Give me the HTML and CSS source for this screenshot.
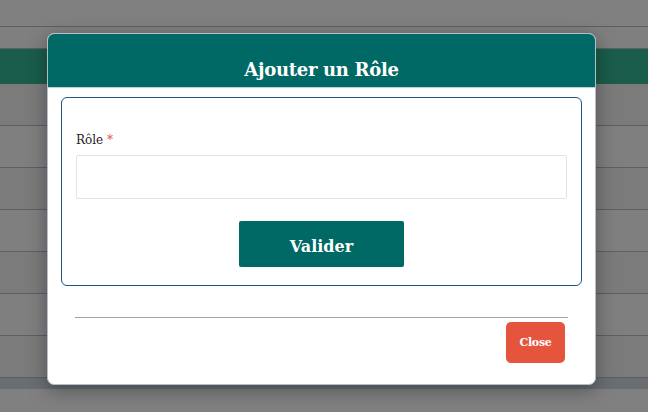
FILE: index.html
```html
<!DOCTYPE html>
<html lang="fr">
<head>
<meta charset="utf-8">
<title>Ajouter un Rôle</title>
<link rel="stylesheet" href="styles.css">
</head>
<body>
<div class="page">
  <div class="row r-top"></div>
  <div class="row r-sub"></div>
  <div class="row r-head"></div>
  <div class="row r-a"></div>
  <div class="row r-b"></div>
  <div class="row r-a"></div>
  <div class="row r-b"></div>
  <div class="row r-a"></div>
  <div class="row r-b"></div>
  <div class="row r-a"></div>
  <div class="row r-foot"></div>
  <div class="row r-end"></div>

  <div class="modal">
    <div class="modal-header">
      <h4 class="modal-title">Ajouter un Rôle</h4>
    </div>
    <div class="modal-body">
      <div class="card">
        <label class="label">Rôle <span class="req">*</span></label>
        <input class="input" type="text">
        <div class="actions">
          <button class="btn-valider">Valider</button>
        </div>
      </div>
    </div>
    <div class="modal-footer">
      <hr class="sep">
      <div class="foot-actions">
        <button class="btn-close">Close</button>
      </div>
    </div>
  </div>
</div>
</body>
</html>
```

FILE: styles.css
```css
* { box-sizing: border-box; }
html, body { margin: 0; padding: 0; }
body {
  width: 648px;
  height: 412px;
  overflow: hidden;
  background: #808080;
  font-family: "DejaVu Serif", "Liberation Serif", serif;
}
.page {
  position: relative;
  width: 648px;
  height: 412px;
}
.row { width: 100%; }
.r-top { height: 27px; background: #808080; border-bottom: 1px solid #5c5f63; }
.r-sub { height: 22px; background: #7f7f7f; border-bottom: 1px solid #5c5f63; }
.r-head { height: 35px; background: #1a5d4b; }
.r-a { height: 42px; background: #7b7b7b; border-bottom: 1px solid #5c5f63; }
.r-b { height: 42px; background: #7f7f7f; border-bottom: 1px solid #5c5f63; }
.r-foot { height: 11px; background: #6a6d71; }
.r-end { height: 22px; background: #808080; }

.modal {
  position: absolute;
  left: 47px;
  top: 33px;
  width: 549px;
  height: 352px;
  background: #fff;
  border: 1px solid #b3bfcb;
  border-radius: 7px;
  box-shadow: 0 5px 20px rgba(0,0,0,0.35);
  display: flex;
  flex-direction: column;
}
.modal-header {
  height: 54px;
  background: #006966;
  border-radius: 6px 6px 0 0;
  border-bottom: 1px solid #c3d0d6;
  display: flex;
  justify-content: center;
  padding-top: 25px;
}
.modal-title {
  margin: 0;
  color: #fff;
  font-size: 18px;
  font-weight: bold;
  line-height: 22px;
  letter-spacing: -0.3px;
}
.modal-body {
  padding: 9px 13px 0 13px;
}
.card {
  height: 189px;
  border: 1px solid #1d5380;
  border-radius: 6px;
  padding: 35px 14px 0 14px;
  display: flex;
  flex-direction: column;
}
.label {
  font-size: 12px;
  color: #222;
  line-height: 14px;
  margin-bottom: 8px;
}
.req { color: #e74c3c; }
.input {
  height: 44px;
  width: 100%;
  border: 1px solid #e3e3e3;
  border-radius: 2px;
  background: #fff;
  outline: none;
}
.actions {
  display: flex;
  justify-content: center;
  margin-top: 22px;
}
.btn-valider {
  width: 165px;
  height: 46px;
  background: #006966;
  color: #fff;
  border: none;
  border-radius: 2px;
  font-family: "DejaVu Serif", "Liberation Serif", serif;
  font-weight: bold;
  font-size: 16px;
  padding-top: 6px;
}
.modal-footer {
  padding: 31px 27px 0 27px;
}
.sep {
  margin: 0;
  border: none;
  border-top: 1px solid #9aa4ae;
}
.foot-actions {
  display: flex;
  justify-content: flex-end;
  padding-top: 4px;
  padding-right: 3px;
}
.btn-close {
  width: 59px;
  height: 41px;
  background: #e5553e;
  color: #fff;
  border: none;
  border-radius: 5px;
  font-family: "DejaVu Serif", "Liberation Serif", serif;
  font-weight: bold;
  font-size: 11px;
  letter-spacing: -0.3px;
}
```
